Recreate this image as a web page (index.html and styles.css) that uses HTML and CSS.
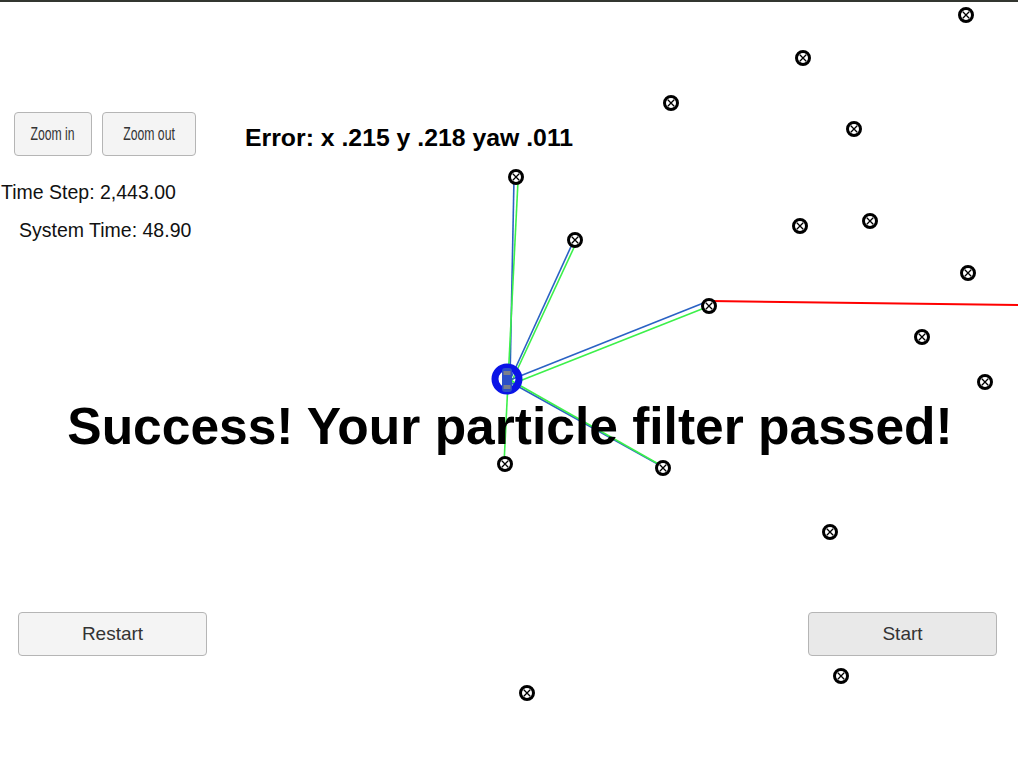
FILE: index.html
```html
<!DOCTYPE html>
<html>
<head>
<meta charset="utf-8">
<link rel="stylesheet" href="styles.css">
</head>
<body>
<div class="stage">
  <svg class="canvas" width="1018" height="765" viewBox="0 0 1018 765">
    <defs>
      <g id="lm">
        <circle r="6.5" fill="#fff" stroke="#000" stroke-width="3"/>
        <path d="M-3.2 -3.2 L3.2 3.2 M3.2 -3.2 L-3.2 3.2" stroke="#000" stroke-width="1.3"/>
      </g>
    </defs>
    <!-- observation lines -->
    <g stroke-width="1.6" fill="none">
      <line x1="510" y1="380" x2="514" y2="178" stroke="#2a62c4"/>
      <line x1="508" y1="382" x2="518" y2="181" stroke="#3cf04a"/>
      <line x1="510" y1="380" x2="574" y2="240" stroke="#2a62c4"/>
      <line x1="511" y1="383" x2="577" y2="241" stroke="#3cf04a"/>
      <line x1="510" y1="380" x2="706" y2="302" stroke="#2a62c4"/>
      <line x1="512" y1="384" x2="707" y2="307" stroke="#3cf04a"/>
      <line x1="510" y1="382" x2="663" y2="467" stroke="#2a62c4"/>
      <line x1="512" y1="381" x2="662" y2="466" stroke="#3cf04a"/>
      <line x1="508" y1="382" x2="504" y2="464" stroke="#3cf04a"/>
    </g>
    <polyline points="710,301 1018,305" stroke="#ff0000" stroke-width="2" fill="none"/>
    <!-- robot -->
    <circle cx="507" cy="379" r="12" fill="none" stroke="#0a14e6" stroke-width="7"/>
    <rect x="502" y="368" width="10" height="24" rx="3" fill="#2c4fc8"/>
    <rect x="503.5" y="371" width="7" height="4" fill="#7a7f8c"/>
    <rect x="503.5" y="385" width="7" height="4" fill="#7a7f8c"/>
    <!-- landmarks -->
    <use href="#lm" x="966" y="15"/>
    <use href="#lm" x="803" y="58"/>
    <use href="#lm" x="671" y="103"/>
    <use href="#lm" x="854" y="129"/>
    <use href="#lm" x="516" y="177"/>
    <use href="#lm" x="575" y="240"/>
    <use href="#lm" x="800" y="226"/>
    <use href="#lm" x="870" y="221"/>
    <use href="#lm" x="968" y="273"/>
    <use href="#lm" x="709" y="306"/>
    <use href="#lm" x="922" y="337"/>
    <use href="#lm" x="985" y="382"/>
    <use href="#lm" x="505" y="464"/>
    <use href="#lm" x="663" y="468"/>
    <use href="#lm" x="830" y="532"/>
    <use href="#lm" x="841" y="676"/>
    <use href="#lm" x="527" y="693"/>
  </svg>

  <div class="content">
    <div class="top-row">
      <div class="zoom-group">
        <button class="btn-zoom btn-zoom-in"><span class="narrow">Zoom in</span></button>
        <button class="btn-zoom btn-zoom-out"><span class="narrow">Zoom out</span></button>
      </div>
      <div class="error-text">Error: x .215 y .218 yaw .011</div>
    </div>
    <div class="stat stat-step">Time Step: 2,443.00</div>
    <div class="stat stat-sys">System Time: 48.90</div>
    <div class="success">Success! Your particle filter passed!</div>
    <div class="bottom-row">
      <button class="btn-wide btn-restart">Restart</button>
      <button class="btn-wide btn-start">Start</button>
    </div>
  </div>
</div>
</body>
</html>
```

FILE: styles.css
```css
html, body {
  margin: 0;
  padding: 0;
  background: #fff;
}
body {
  width: 1018px;
  height: 765px;
  overflow: hidden;
  font-family: "Liberation Sans", Arial, sans-serif;
}
.stage {
  position: relative;
  width: 1018px;
  height: 765px;
  border-top: 2px solid #333630;
  box-sizing: border-box;
}
.canvas {
  position: absolute;
  left: 0;
  top: -2px;
}
.content {
  position: relative;
  display: flex;
  flex-direction: column;
}
.top-row {
  display: flex;
  align-items: center;
  margin-top: 110px;
  padding-left: 14px;
}
.zoom-group {
  display: flex;
  gap: 10px;
}
button {
  margin: 0;
  font-family: "Liberation Sans", Arial, sans-serif;
  color: #333;
  border: 1px solid #b5b5b5;
  border-radius: 4px;
  background: #f4f4f4;
  padding: 0;
  box-sizing: border-box;
}
.btn-zoom {
  height: 44px;
  font-size: 18px;
  color: #333;
  white-space: nowrap;
}
.narrow {
  display: inline-block;
  transform: scaleX(0.68);
}
.btn-zoom-in { width: 78px; }
.btn-zoom-out { width: 94px; }
.error-text {
  margin-left: 49px;
  margin-top: 8px;
  font-weight: bold;
  font-size: 24.8px;
  color: #000;
  line-height: 28px;
}
.stat {
  font-size: 19.5px;
  color: #111;
  line-height: 24px;
}
.stat-step {
  margin-top: 24px;
  padding-left: 1px;
}
.stat-sys {
  margin-top: 14px;
  padding-left: 19px;
}
.success {
  margin-top: 154px;
  text-align: center;
  font-weight: bold;
  font-size: 51.5px;
  line-height: 60px;
  color: #000;
  padding-left: 2px;
}
.bottom-row {
  display: flex;
  justify-content: space-between;
  margin-top: 156px;
  padding: 0 21px 0 18px;
}
.btn-wide {
  width: 189px;
  height: 44px;
  font-size: 19px;
}
.btn-start {
  background: #e9e9e9;
}
```
